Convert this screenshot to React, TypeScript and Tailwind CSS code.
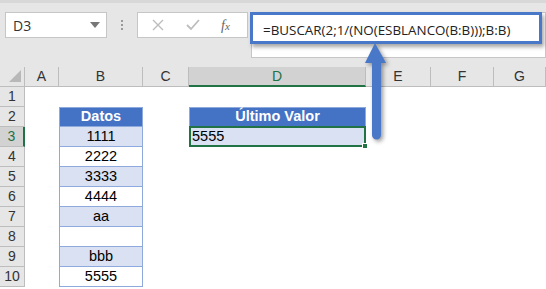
import React from "react";

const COLS = ["A", "B", "C", "D", "E", "F", "G"];
const DATA = ["1111", "2222", "3333", "4444", "aa", "", "bbb", "5555"];

export default function App() {
  return (
    <div className="relative w-[546px] h-[289px] overflow-hidden bg-white font-['Liberation_Sans',sans-serif]">
      {/* Toolbar / formula bar */}
      <div className="h-[67px] bg-[#e6e6e6] border-t-[3px] border-[#d8d8d8] flex items-start">
        <div className="mt-[9px] ml-[5px] w-[102px] h-[26px] bg-white border border-[#c6c6c6] flex items-center justify-between pl-[7px] pr-[6px]">
          <span className="text-[14px] text-[#333] font-['Open_Sans',sans-serif]">D3</span>
          <svg width="10" height="6" viewBox="0 0 10 6"><path d="M0 0h10L5 6z" fill="#777" /></svg>
        </div>
        <div className="mt-[17px] ml-[14px] flex flex-col gap-[2px]">
          <span className="w-[2px] h-[2px] bg-[#9a9a9a]" />
          <span className="w-[2px] h-[2px] bg-[#9a9a9a]" />
          <span className="w-[2px] h-[2px] bg-[#9a9a9a]" />
        </div>
        <div className="mt-[9px] ml-[14px] w-[111px] h-[26px] bg-white border border-[#c6c6c6] flex items-center">
          <svg className="ml-[14px]" width="12" height="12" viewBox="0 0 12 12"><path d="M1 1l10 10M11 1L1 11" stroke="#bdbdbd" strokeWidth="1.4" /></svg>
          <svg className="ml-[22px]" width="14" height="12" viewBox="0 0 14 12"><path d="M1 6l4 4 8-9" stroke="#bdbdbd" strokeWidth="1.8" fill="none" /></svg>
          <span className="ml-[21px] text-[14px] italic text-[#666] font-['Liberation_Serif',serif]">f<span className="text-[11px]">x</span></span>
        </div>
        <div className="mt-[9px] ml-[3px] flex-1 h-[46px] bg-white border border-[#c6c6c6] pl-[11px] pt-[5px]">
          <span className="text-[13.4px] text-[#222] font-['Open_Sans',sans-serif]">=BUSCAR(2;1/(NO(ESBLANCO(B:B)));B:B)</span>
        </div>
      </div>

      {/* Sheet */}
      <div className="grid grid-cols-[25px_34px_84px_46px_177px_65px_63px_1fr] grid-rows-[20px_repeat(10,20px)] text-[14.5px]">
        <div className="bg-[#e6e6e6] border-r border-b border-[#bdbdbd] flex items-end justify-end pr-[3px] pb-[4px]">
          <svg width="12" height="12" viewBox="0 0 12 12"><path d="M12 0V12H0z" fill="#b8b8b8" /></svg>
        </div>
        {COLS.map((c) => (
          <div
            key={c}
            className={
              c === "D"
                ? "bg-[#d2d2d2] border-r border-b-2 border-r-[#bdbdbd] border-b-[#217346] flex items-center justify-center text-[14px] text-[#217346]"
                : "bg-[#e6e6e6] border-r border-b border-[#bdbdbd] flex items-center justify-center text-[14px] text-[#333]"
            }
          >
            {c}
          </div>
        ))}

        {Array.from({ length: 10 }, (_, i) => i + 1).map((r) => (
          <React.Fragment key={r}>
            <div
              className={
                r === 3
                  ? "bg-[#d2d2d2] border-r-2 border-b border-r-[#217346] border-b-[#bdbdbd] flex items-center justify-center text-[14px] text-[#217346]"
                  : "bg-[#e6e6e6] border-r border-b border-[#bdbdbd] flex items-center justify-center text-[14px] text-[#333]"
              }
            >
              {r}
            </div>
            <div />
            <BCell r={r} />
            <div />
            <DCell r={r} />
            <div />
            <div />
            <div />
          </React.Fragment>
        ))}
      </div>

      {/* Highlight around formula */}
      <div className="absolute left-[250px] top-[12px] w-[292px] h-[32px] border-[3px] border-[#4a78c8] shadow-[2px_3px_4px_rgba(0,0,0,0.35)]" />

      {/* Arrow */}
      <svg className="absolute left-[364px] top-[42px] drop-shadow-[2px_2px_2px_rgba(0,0,0,0.4)]" width="26" height="100" viewBox="0 0 26 100">
        <path d="M11 1L1 21h7v72a4.5 4.5 0 0 0 9 0V21H22z" fill="#4a78c8" />
      </svg>
    </div>
  );
}

function BCell({ r }: { r: number }) {
  if (r === 1) return <div />;
  if (r === 2)
    return (
      <div className="bg-[#4472c4] border border-[#8ea9db] flex items-center justify-center text-white font-bold">
        Datos
      </div>
    );
  const v = DATA[r - 3];
  return (
    <div
      className={`${r % 2 === 1 ? "bg-[#d9e1f2]" : "bg-white"} border-x border-b border-[#8ea9db] flex items-center justify-center text-black`}
    >
      {v}
    </div>
  );
}

function DCell({ r }: { r: number }) {
  if (r === 2)
    return (
      <div className="bg-[#4472c4] border border-[#8ea9db] flex items-center justify-center text-white font-bold">
        Último Valor
      </div>
    );
  if (r === 3)
    return (
      <div className="relative bg-[#d9e1f2] border-2 border-[#217346] flex items-center pl-[1px] text-black -mt-[1px] h-[21px]">
        5555
        <span className="absolute -right-[4px] -bottom-[4px] w-[6px] h-[6px] bg-[#217346] border border-white" />
      </div>
    );
  return <div />;
}
